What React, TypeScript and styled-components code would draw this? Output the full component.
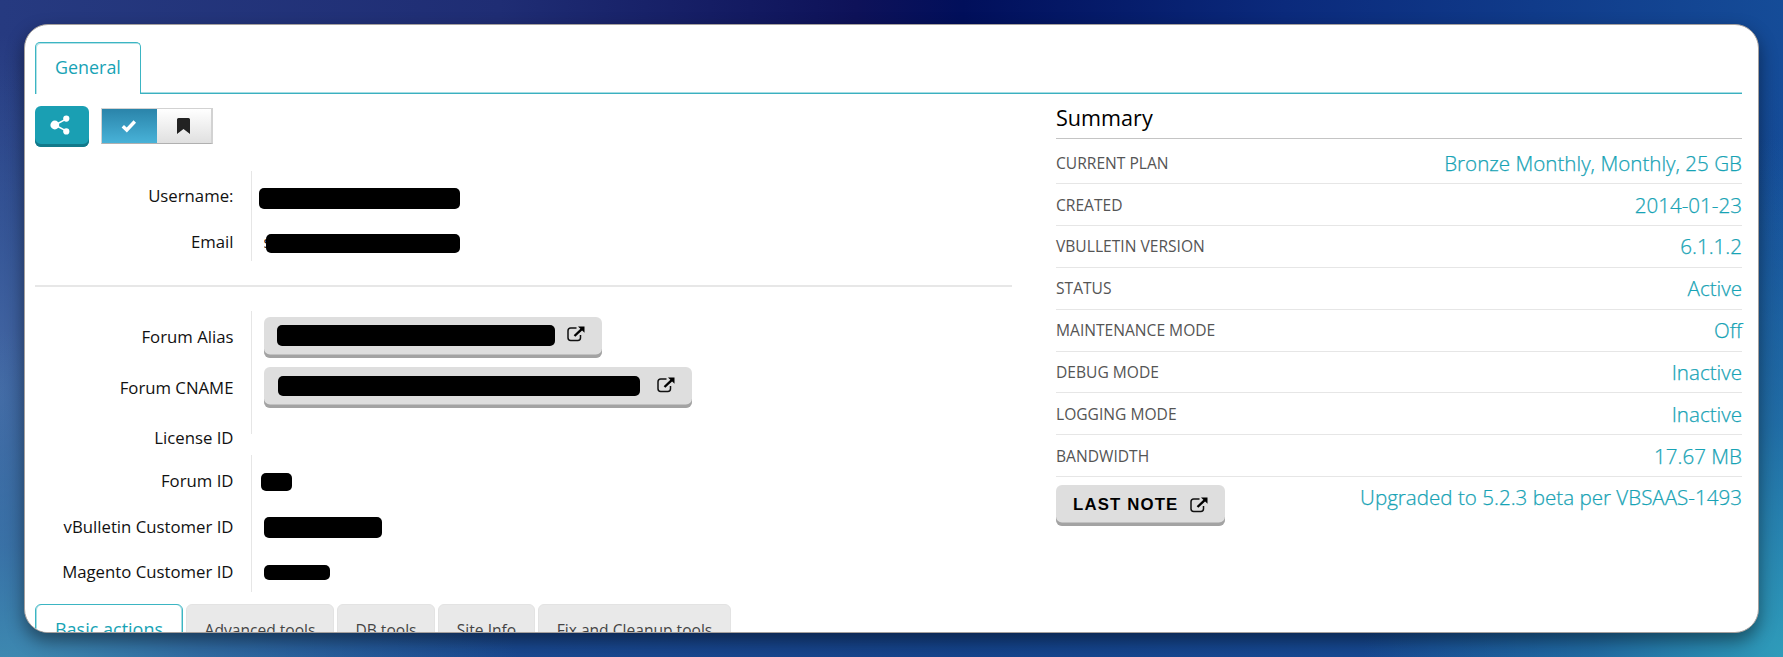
import React from "react";
import styled, { createGlobalStyle, css } from "styled-components";

const sans = `"Open Sans", "Noto Sans", sans-serif`;
const teal = "#17a3b5";

const GlobalStyle = createGlobalStyle`
  *, *::before, *::after { box-sizing: border-box; }
  html, body { margin: 0; padding: 0; }
  body { font-family: ${sans}; font-size: 16px; color: #111; overflow: hidden; }
`;

const Backdrop = styled.div`
  width: 1783px;
  height: 657px;
  padding: 24px;
  overflow: hidden;
  background:
    radial-gradient(ellipse 420px 520px at 100% 100%, #2f9cba 0%, rgba(38, 125, 172, 0.65) 45%, rgba(30, 95, 165, 0) 100%),
    radial-gradient(ellipse 520px 360px at 0% 105%, #4090b4 0%, rgba(60, 125, 172, 0.65) 40%, rgba(40, 90, 150, 0) 100%),
    radial-gradient(ellipse 130px 360px at 0% 60%, #4568a4 0%, rgba(68, 100, 162, 0) 100%),
    linear-gradient(180deg, rgba(24, 78, 150, 0) 10%, rgba(24, 78, 150, 0.85) 100%),
    linear-gradient(90deg, #263a80 0%, #1f2d74 28%, #0e1259 48%, #010f5b 54%, #0b2a7c 72%, #154c98 100%);
`;

const Panel = styled.main`
  display: flex;
  flex-direction: column;
  width: 1735px;
  height: 609px;
  padding: 17px 16px 0 10px;
  overflow: hidden;
  background: #fff;
  border: 1px solid #a5a09e;
  border-radius: 24px;
  box-shadow: 0 8px 18px rgba(0, 0, 0, 0.45);
`;

const TopTabs = styled.nav`
  display: flex;
  flex: none;
  height: 52px;
`;

const GeneralTab = styled.div`
  width: 106px;
  border: 1px solid #3bb5c3;
  border-bottom: 0;
  border-radius: 5px 5px 0 0;
  box-shadow: inset 1px 1px 0 #b5e2e7;
  padding-left: 19px;
  color: ${teal};
  font-size: 17.9px;
  line-height: 49px;
`;

const TabRule = styled.div`
  flex: 1;
  border-bottom: 1px solid #3bb0c0;
  box-shadow: inset 0 -1px 0 #a5dde3;
`;

const Columns = styled.div`
  display: flex;
  justify-content: space-between;
  flex: none;
  height: 510px;
`;

const Details = styled.section`
  width: 977px;
`;

const Toolbar = styled.div`
  display: flex;
  gap: 12px;
  height: 77px;
  padding-top: 12px;
`;

const ShareButton = styled.button`
  display: grid;
  place-items: center;
  width: 54px;
  height: 41px;
  padding: 0 4px 4px 0;
  border: 0;
  border-radius: 6px;
  background: #1a9fb3;
  box-shadow: inset 0 -3px 0 #12798a;
`;

const Toggle = styled.div`
  display: flex;
  width: 112px;
  height: 36px;
  margin-top: 2px;
  border: 1px solid #d2d2d2;
  border-right-width: 2px;
  border-bottom-color: #b0b0b0;
`;

const ToggleOption = styled.div<{ $on?: boolean }>`
  display: grid;
  place-items: center;
  flex: 1;
  background: ${(p) => (p.$on ? "linear-gradient(#2a84aa, #48b2d8)" : "linear-gradient(#fff, #e0e0e0)")};
`;

const FieldGroup = styled.div<{ $top: number; $height: number }>`
  position: relative;
  height: ${(p) => p.$height}px;
  margin-top: ${(p) => p.$top}px;
`;

const GroupRule = styled.div<{ $height: number }>`
  position: absolute;
  top: 0;
  left: 216px;
  width: 1px;
  height: ${(p) => p.$height}px;
  background: #e6e6e6;
`;

const Field = styled.div<{ $height: number }>`
  display: flex;
  align-items: center;
  height: ${(p) => p.$height}px;
`;

const FieldLabel = styled.span`
  width: 198.5px;
  flex: none;
  text-align: right;
  white-space: nowrap;
  font-size: 16.75px;
  line-height: 22px;
`;

const Redaction = styled.span<{ $w: number; $h: number; $left?: number; $drop?: number }>`
  flex: none;
  width: ${(p) => p.$w}px;
  height: ${(p) => p.$h}px;
  margin-left: ${(p) => p.$left ?? 0}px;
  margin-top: ${(p) => p.$drop ?? 0}px;
  border-radius: 5px;
  background: #000;
`;

const Sliver = styled.span`
  width: 2px;
  margin-left: 30px;
  overflow: hidden;
  font-size: 16px;
`;

const Divider = styled.hr`
  height: 2px;
  margin: 24px 0 0;
  border: 0;
  background: #e7e7e7;
`;

const raised = css`
  display: flex;
  align-items: center;
  height: 41px;
  border: 0;
  border-radius: 6px;
  background: #dedede;
  box-shadow: inset 0 -3.5px 0 #a3a3a3;
`;

const LinkButton = styled.a<{ $w: number; $pad: number }>`
  ${raised}
  width: ${(p) => p.$w}px;
  margin-left: 30.5px;
  padding: 0 17.5px 6px ${(p) => p.$pad}px;
  justify-content: space-between;
`;

const ActionTabs = styled.nav`
  display: flex;
  gap: 3px;
  margin-top: 12px;
`;

const ActionTab = styled.div<{ $w: number; $active?: boolean }>`
  width: ${(p) => p.$w}px;
  height: 50px;
  text-align: center;
  white-space: nowrap;
  border-radius: 6px 6px 0 0;
  line-height: 50px;
  font-size: 15.6px;
  color: #444;
  background: #e9e9e9;
  border: 1px solid #e3e3e3;
  ${(p) =>
    p.$active &&
    css`
      color: ${teal};
      background: #fff;
      border: 1px solid #3bb5c3;
      box-shadow: inset 1px 0 0 #a5dde3, inset -1px 0 0 #a5dde3;
      font-size: 18px;
      line-height: 48px;
    `}
`;

const Summary = styled.section`
  width: 686px;
`;

const SummaryTitle = styled.h2`
  height: 45px;
  margin: 0;
  padding-top: 8px;
  border-bottom: 1px solid #c4c4c4;
  color: #000;
  font-size: 21.6px;
  font-weight: 400;
  line-height: 32px;
`;

const SummaryRow = styled.div`
  display: flex;
  justify-content: space-between;
  align-items: center;
  height: 41.85px;
  border-bottom: 1px solid #e6e6e6;

  &:first-of-type { height: 45.2px; padding-top: 4px; }
`;

const RowName = styled.span`
  color: #555;
  font-size: 15.6px;
  line-height: 22px;
`;

const RowValue = styled.span`
  color: ${teal};
  font-size: 20.6px;
  font-weight: 300;
  -webkit-text-stroke: 0.25px ${teal};
  line-height: 28px;
  white-space: nowrap;
`;

const NoteRow = styled.div`
  display: flex;
  justify-content: space-between;
  align-items: flex-start;
  padding-top: 8px;

  ${RowValue} { margin-top: -2px; }
`;

const NoteButton = styled.button`
  ${raised}
  width: 169px;
  padding: 0 17px 2px;
  justify-content: space-between;
  color: #000;
  font: bold 16.8px "Liberation Sans", Arial, sans-serif;
  letter-spacing: 1.15px;
  white-space: nowrap;
`;

const ShareIcon = () => (
  <svg width="20" height="20" viewBox="0 0 20 20" fill="#fff">
    <path d="M5 10 16.500 3.800M5 10l11.500 6.200" stroke="#fff" strokeWidth="1.500" />
    <circle cx="4.800" cy="10" r="4.400" />
    <circle cx="16.300" cy="3.600" r="3.100" />
    <circle cx="16.300" cy="16.400" r="3.100" />
  </svg>
);

const CheckIcon = () => (
  <svg width="16" height="14" viewBox="0 0 16 14">
    <path d="M1.800 7.200 5.800 11 13.800 2.500" fill="none" stroke="#fff" strokeWidth="3.400" />
  </svg>
);

const BookmarkIcon = () => (
  <svg width="13" height="16" viewBox="0 0 13 16">
    <path d="M1.500 0h10Q13 0 13 1.500V16L6.500 11 0 16V1.500Q0 0 1.500 0Z" fill="#222" />
  </svg>
);

const ExternalIcon = () => (
  <svg width="18" height="16" viewBox="0 0 18 16" fill="none">
    <path d="M9.500 2H3.700Q1 2 1 4.700v7.100q0 2.700 2.700 2.700h7.100q2.700 0 2.700-2.700V9" stroke="#111" strokeWidth="1.500" />
    <path d="M7.500 10 15 2.800" stroke="#000" strokeWidth="2.400" />
    <path d="M11 .5h6.500v6.200Z" fill="#000" />
  </svg>
);

const summary = [
  ["CURRENT PLAN", "Bronze Monthly, Monthly, 25 GB"],
  ["CREATED", "2014-01-23"],
  ["VBULLETIN VERSION", "6.1.1.2"],
  ["STATUS", "Active"],
  ["MAINTENANCE MODE", "Off"],
  ["DEBUG MODE", "Inactive"],
  ["LOGGING MODE", "Inactive"],
  ["BANDWIDTH", "17.67 MB"],
];

const actionTabs: [string, number][] = [
  ["Advanced tools", 148],
  ["DB tools", 98],
  ["Site Info", 97],
  ["Fix and Cleanup tools", 193],
];

export default function App() {
  return (
    <Backdrop>
      <GlobalStyle />
      <Panel>
        <TopTabs>
          <GeneralTab>General</GeneralTab>
          <TabRule />
        </TopTabs>
        <Columns>
          <Details>
            <Toolbar>
              <ShareButton><ShareIcon /></ShareButton>
              <Toggle>
                <ToggleOption $on><CheckIcon /></ToggleOption>
                <ToggleOption><BookmarkIcon /></ToggleOption>
              </Toggle>
            </Toolbar>

            <FieldGroup $top={0} $height={90}>
              <GroupRule $height={90} />
              <Field $height={50}>
                <FieldLabel>Username:</FieldLabel>
                <Redaction $w={201} $h={21} $left={25.500} $drop={5} />
              </Field>
              <Field $height={42}>
                <FieldLabel>Email</FieldLabel>
                <Sliver>s</Sliver>
                <Redaction $w={194} $h={19} $drop={3} />
              </Field>
            </FieldGroup>

            <Divider />

            <FieldGroup $top={24} $height={144}>
              <GroupRule $height={123} />
              <Field $height={52}>
                <FieldLabel>Forum Alias</FieldLabel>
                <LinkButton $w={338} $pad={13}>
                  <Redaction $w={278} $h={21} $drop={2} />
                  <ExternalIcon />
                </LinkButton>
              </Field>
              <Field $height={49}>
                <FieldLabel>Forum CNAME</FieldLabel>
                <LinkButton $w={428} $pad={14}>
                  <Redaction $w={362} $h={20} $drop={2} />
                  <ExternalIcon />
                </LinkButton>
              </Field>
              <Field $height={52}>
                <FieldLabel>License ID</FieldLabel>
              </Field>
            </FieldGroup>

            <FieldGroup $top={0} $height={137}>
              <GroupRule $height={137} />
              <Field $height={52}>
                <FieldLabel>Forum ID</FieldLabel>
                <Redaction $w={31} $h={18} $left={27.500} $drop={1} />
              </Field>
              <Field $height={39}>
                <FieldLabel>vBulletin Customer ID</FieldLabel>
                <Redaction $w={118} $h={21} $left={30.500} $drop={2} />
              </Field>
              <Field $height={52}>
                <FieldLabel>Magento Customer ID</FieldLabel>
                <Redaction $w={66} $h={15} $left={30.500} />
              </Field>
            </FieldGroup>

            <ActionTabs>
              <ActionTab $w={148} $active>Basic actions</ActionTab>
              {actionTabs.map(([name, width]) => (
                <ActionTab key={name} $w={width}>{name}</ActionTab>
              ))}
            </ActionTabs>
          </Details>

          <Summary>
            <SummaryTitle>Summary</SummaryTitle>
            {summary.map(([name, value]) => (
              <SummaryRow key={name}>
                <RowName>{name}</RowName>
                <RowValue>{value}</RowValue>
              </SummaryRow>
            ))}
            <NoteRow>
              <NoteButton>LAST NOTE <ExternalIcon /></NoteButton>
              <RowValue>Upgraded to 5.2.3 beta per VBSAAS-1493</RowValue>
            </NoteRow>
          </Summary>
        </Columns>
      </Panel>
    </Backdrop>
  );
}
